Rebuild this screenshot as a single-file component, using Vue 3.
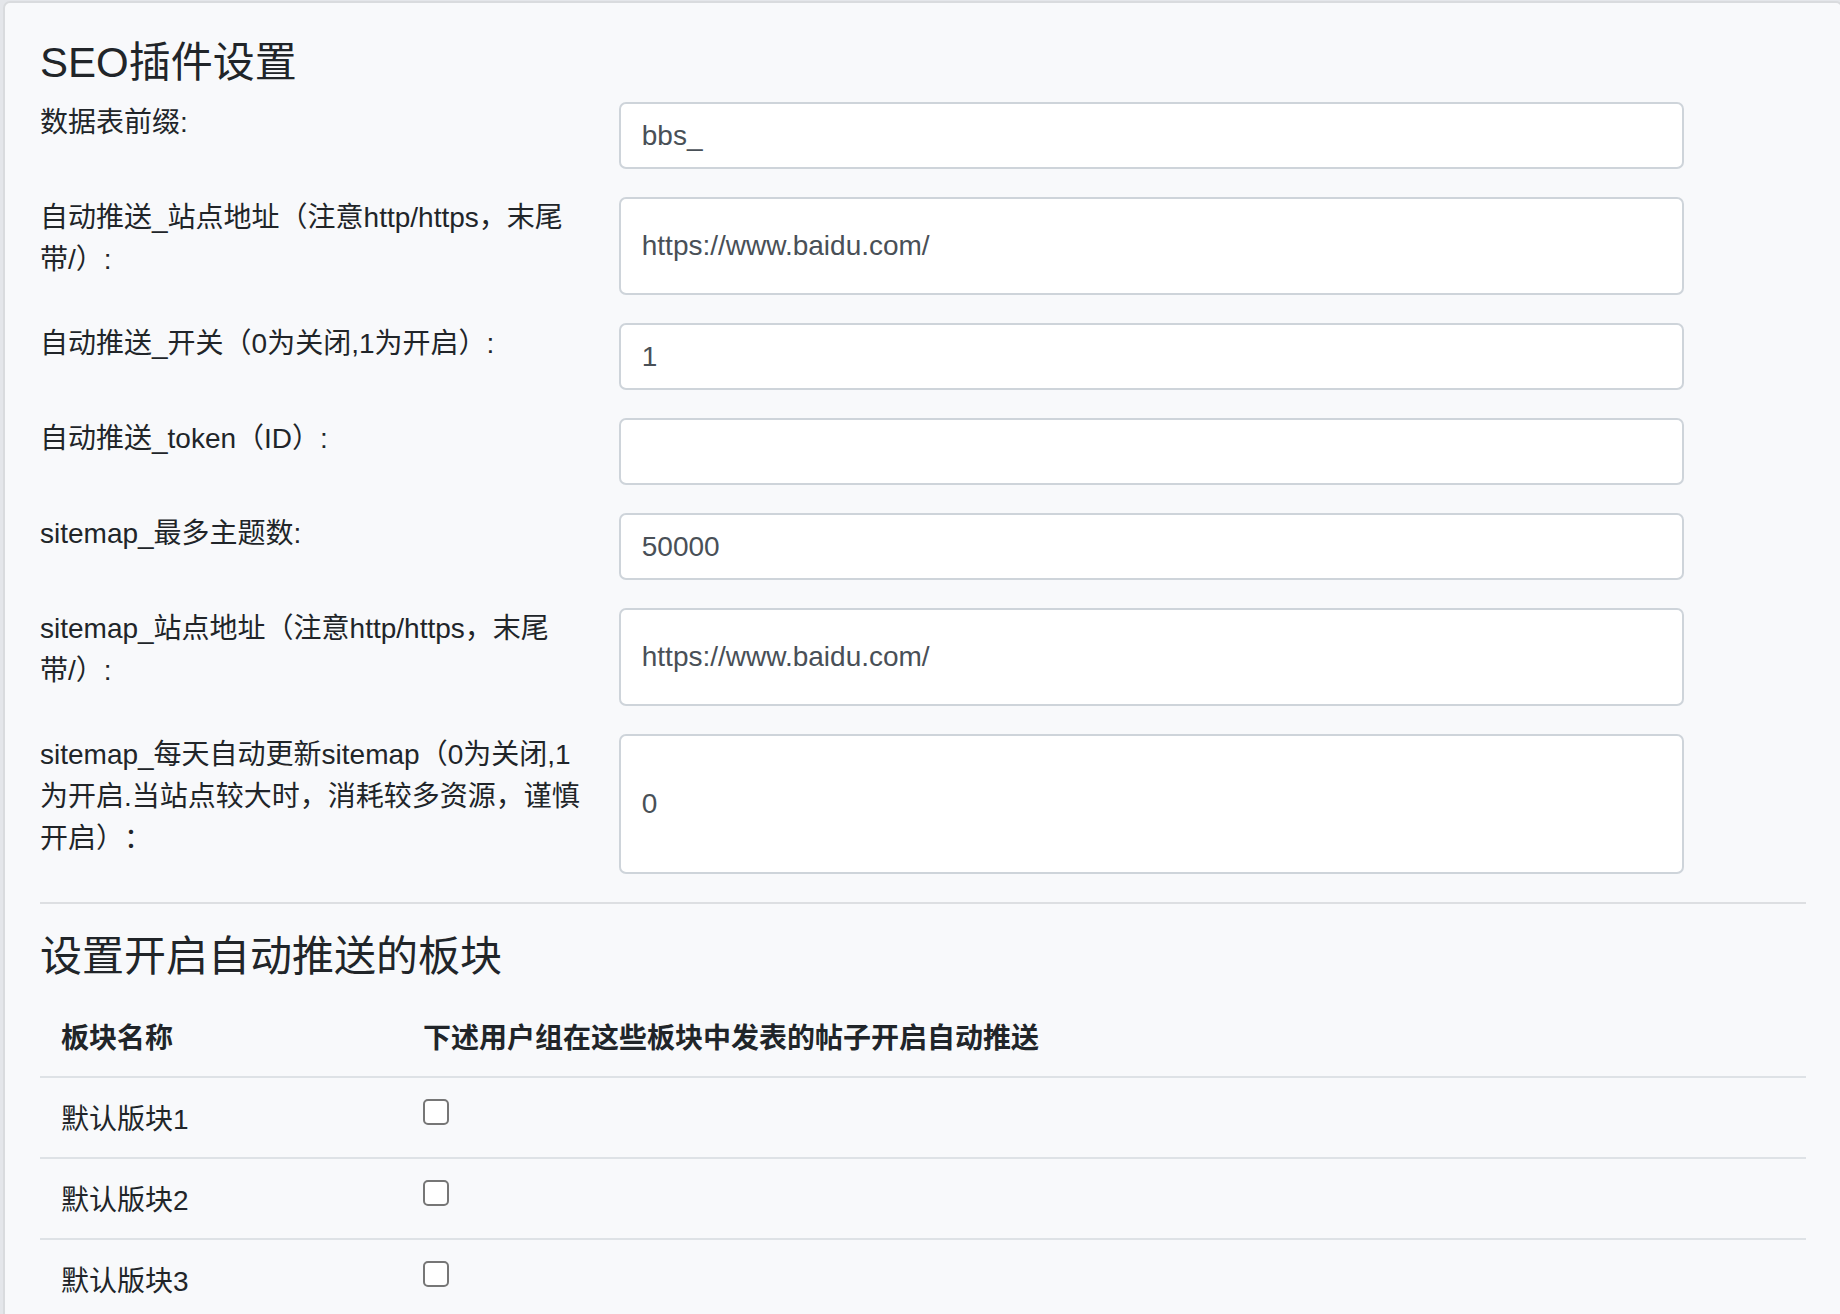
<script setup>
import { reactive, ref } from 'vue'

const fields = reactive([
  { id: 'prefix', label: '数据表前缀:', value: 'bbs_' },
  { id: 'push-url', label: '自动推送_站点地址（注意http/https，末尾带/）:', value: 'https://www.baidu.com/' },
  { id: 'push-on', label: '自动推送_开关（0为关闭,1为开启）:', value: '1' },
  { id: 'push-token', label: '自动推送_token（ID）:', value: '' },
  { id: 'sitemap-max', label: 'sitemap_最多主题数:', value: '50000' },
  { id: 'sitemap-url', label: 'sitemap_站点地址（注意http/https，末尾带/）:', value: 'https://www.baidu.com/' },
  {
    id: 'sitemap-daily',
    label: 'sitemap_每天自动更新sitemap（0为关闭,1为开启.当站点较大时，消耗较多资源，谨慎开启）：',
    value: '0'
  }
])

const forums = ref([
  { id: 1, name: '默认版块1', enabled: false },
  { id: 2, name: '默认版块2', enabled: false },
  { id: 3, name: '默认版块3', enabled: false }
])
</script>

<template>
  <main class="page" lang="zh-CN">
    <form class="card" @submit.prevent>
      <h3 class="title">SEO插件设置</h3>
      <div v-for="f in fields" :key="f.id" class="row">
        <label class="label" :for="f.id">{{ f.label }}</label>
        <input :id="f.id" v-model="f.value" class="control" type="text" />
      </div>
      <hr class="divider" />
      <h3 class="title">设置开启自动推送的板块</h3>
      <table class="table">
        <thead>
          <tr>
            <th class="name" scope="col">板块名称</th>
            <th scope="col">下述用户组在这些板块中发表的帖子开启自动推送</th>
          </tr>
        </thead>
        <tbody>
          <tr v-for="forum in forums" :key="forum.id">
            <td><label :for="'forum-' + forum.id">{{ forum.name }}</label></td>
            <td><input :id="'forum-' + forum.id" v-model="forum.enabled" class="check" type="checkbox" /></td>
          </tr>
        </tbody>
      </table>
    </form>
  </main>
</template>

<style>
body {
  margin: 0;
  background: #e9ecef;
}
</style>

<style scoped>
* {
  box-sizing: border-box;
}
.page {
  height: 100vh;
  overflow: hidden;
  padding: 1px 0 0 3px;
  background: #e4e6ea;
  color: #212529;
  font-family: "Liberation Sans", "Noto Sans CJK SC", sans-serif;
  font-size: 28px;
  line-height: 42px;
  text-spacing-trim: space-all;
}
.card {
  margin-right: -3px;
  padding: 35px;
  border: 2px solid #d9dbde;
  border-radius: 7px;
  background: #f8f9fb;
}
.title {
  margin: 0 0 14px;
  font-size: 42px;
  font-weight: 400;
  line-height: 50px;
}
.row {
  display: grid;
  grid-template-columns: 31.3% 60.3%;
  column-gap: 26px;
  margin-bottom: 28px;
}
.label {
  padding-bottom: 14px;
}
.control {
  width: 100%;
  min-height: 67px;
  padding: 10px 21px;
  border: 2px solid #ced4da;
  border-radius: 7px;
  background: #fff;
  color: #495057;
  font: inherit;
}
.divider {
  height: 2px;
  margin: 28px 0;
  border: 0;
  background: #dddfe2;
}
.table {
  width: 100%;
  border-collapse: separate;
  border-spacing: 0;
}
.table th {
  padding: 22px 21px 16px;
  font-weight: 700;
  text-align: left;
}
.table .name {
  width: 362px;
}
.table td {
  padding: 21px 21px 16px;
  border-top: 2px solid #dee2e6;
  vertical-align: top;
}
.check {
  display: block;
  width: 26px;
  height: 26px;
  margin: 0;
  appearance: none;
  border: 2px solid #767676;
  border-radius: 5px;
  background: #fff;
}
.check:checked {
  border-color: #0075ff;
  background: #0075ff;
}
</style>
